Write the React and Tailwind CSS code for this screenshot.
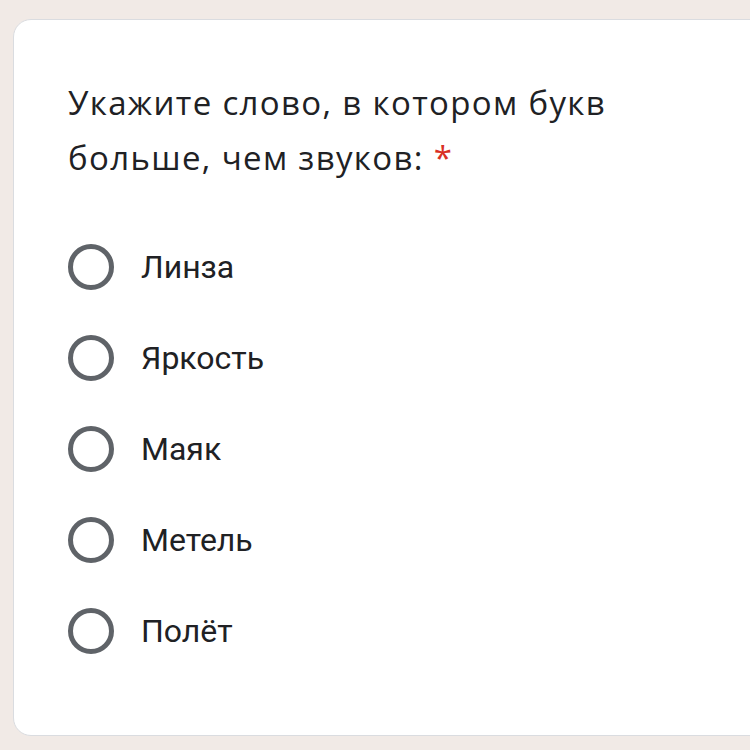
const options = ['Линза', 'Яркость', 'Маяк', 'Метель', 'Полёт'];

export default function App() {
  return (
    <div className="w-[750px] h-[750px] overflow-hidden bg-[#f1eae6] pt-[19px] pl-[13px]">
      <div className="w-[760px] h-[717px] bg-white border border-[#dadce0] rounded-[18px] pl-[54px] pt-[55px]">
        <div
          className="text-[33px] tracking-[1.35px] leading-[55px] text-[#202124] w-[620px]"
          style={{ fontFamily: '"Open Sans", "Noto Sans", sans-serif' }}
        >
          Укажите слово, в котором букв
          <br />
          больше, чем звуков: <span className="text-[#d93025]">*</span>
        </div>
        <div className="mt-[59px] flex flex-col gap-[45px]">
          {options.map((o) => (
            <label key={o} className="flex items-center gap-[27px] h-[46px]">
              <span className="w-[46px] h-[46px] rounded-full border-[5px] border-[#5f6368] shrink-0" />
              <span
                className="text-[32px] text-[#202124]"
                style={{ fontFamily: 'Roboto, "Liberation Sans", sans-serif' }}
              >
                {o}
              </span>
            </label>
          ))}
        </div>
      </div>
    </div>
  );
}
